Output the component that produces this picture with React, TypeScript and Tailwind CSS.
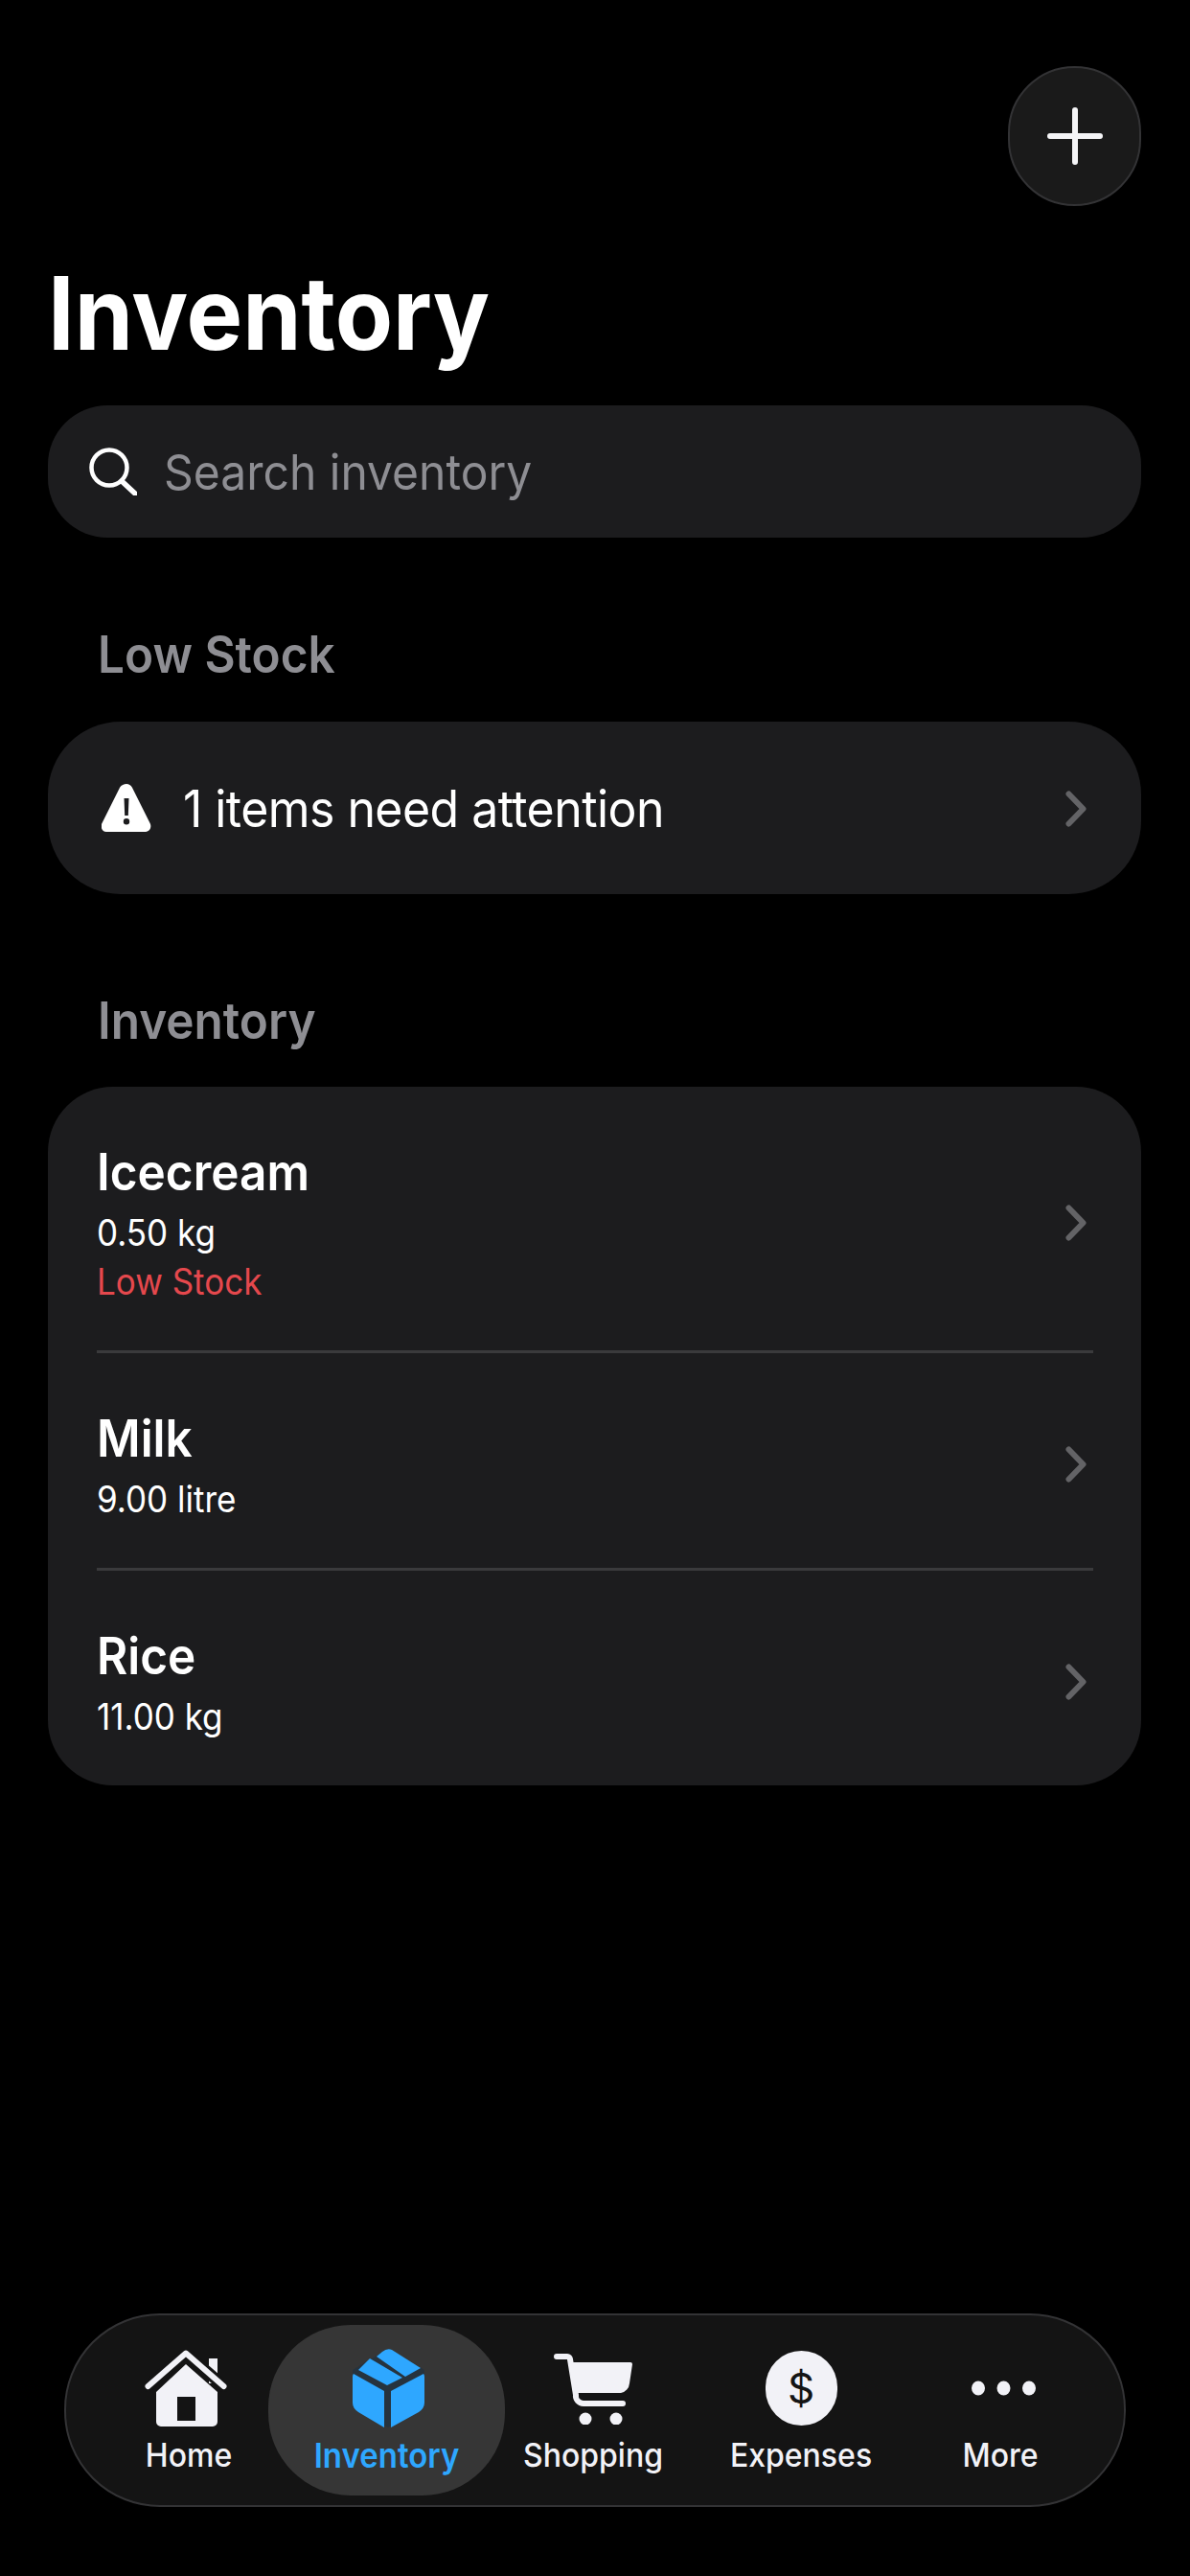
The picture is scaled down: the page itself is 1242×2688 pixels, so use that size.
const tall = "inline-block origin-center scale-y-[1.07]"

const items = [
  { name: "Icecream", qty: "0.50 kg", low: true },
  { name: "Milk", qty: "9.00 litre", low: false },
  { name: "Rice", qty: "11.00 kg", low: false },
]

function Chevron({ className }: { className: string }) {
  return (
    <svg className={`ml-auto shrink-0 ${className}`} width="22" height="38" viewBox="0 0 22 38" aria-hidden="true">
      <path d="M3.500 3.500L18.500 19L3.500 34.500" fill="none" stroke="#636366" strokeWidth="6" strokeLinecap="round" strokeLinejoin="round" />
    </svg>
  )
}

function HomeIcon() {
  return (
    <svg className="mr-[6px]" width="86" height="80" viewBox="0 0 86 80" aria-hidden="true">
      <path d="M67 9h9v26h-9z" fill="#f2f2f7" />
      <path d="M3.500 38L43 3.500L82.500 38" fill="none" stroke="#141414" strokeWidth="12" strokeLinecap="round" strokeLinejoin="round" />
      <path d="M3.500 38L43 3.500L82.500 38" fill="none" stroke="#f2f2f7" strokeWidth="6" strokeLinecap="round" strokeLinejoin="round" />
      <path fillRule="evenodd" d="M43 15L76 44V75a5 5 0 0 1-5 5H17a5 5 0 0 1-5-5V44Z M34 49V74H53V49Z" fill="#f2f2f7" />
    </svg>
  )
}

function BoxIcon() {
  return (
    <svg className="ml-[4px]" width="75" height="82" viewBox="0 0 75 82" aria-hidden="true">
      <path d="M37 0L75 22V60L37 82L0 60V22Z" fill="#26333e" />
      <path d="M1 26L33 44V82L6 66Q0 62 0 56V29Q0 27 1 26Z" fill="#2ea7ff" />
      <path d="M74 26L40 44V82L69 66Q75 62 75 56V29Q75 27 74 26Z" fill="#2ea7ff" />
      <path d="M6 22L18 10L52 30L36 38Z" fill="#2ea7ff" />
      <path d="M25 8L31 3Q36 -1 41 1L71 20L55 29Z" fill="#2ea7ff" />
    </svg>
  )
}

function CartIcon() {
  return (
    <svg width="83" height="75" viewBox="0 0 83 75" aria-hidden="true">
      <path d="M3 4H14a3 3 0 0 1 3 3L23 44a8 8 0 0 0 8 9H72" fill="none" stroke="#f2f2f7" strokeWidth="6" strokeLinecap="round" />
      <path d="M19 10H80a2 2 0 0 1 2 2L79 32a11 11 0 0 1-9 10H25Z" fill="#f2f2f7" />
      <circle cx="33" cy="69" r="6.500" fill="#f2f2f7" />
      <circle cx="65" cy="69" r="6.500" fill="#f2f2f7" />
    </svg>
  )
}

function DotsIcon() {
  return (
    <svg className="ml-[6px]" width="67" height="16" viewBox="0 0 67 16" aria-hidden="true">
      <ellipse cx="7" cy="8" rx="7" ry="7.500" fill="#f2f2f7" />
      <ellipse cx="33.500" cy="8" rx="7" ry="7.500" fill="#f2f2f7" />
      <ellipse cx="60" cy="8" rx="7" ry="7.500" fill="#f2f2f7" />
    </svg>
  )
}

function NavItem({ label, width, active, children }: { label: string; width: string; active?: boolean; children: React.ReactNode }) {
  return (
    <div className={`${width} h-[178px] flex flex-col items-center rounded-[86px] pt-[25px] ${active ? "bg-[#363636]" : ""}`}>
      <div className="h-[82px] flex items-center justify-center">{children}</div>
      <span className={`${tall} mt-[9px] leading-[40px] whitespace-nowrap ${active ? "text-[33px] font-semibold text-[#2ea7ff]" : "text-[32px] font-medium text-[#f2f2f7]"}`}>
        {label}
      </span>
    </div>
  )
}

export default function App() {
  return (
    <div className="w-[1242px] h-[2688px] bg-black flex flex-col pl-[50px] pr-[51px] font-['Inter',sans-serif] text-white overflow-hidden">
      {/* Add button */}
      <div className="flex justify-end pt-[69px]">
        <button aria-label="Add" className="w-[139px] h-[146px] rounded-full bg-[#1a1a1a] border-2 border-[#333335] flex items-center justify-center">
          <svg width="58" height="60" viewBox="0 0 58 60" aria-hidden="true">
            <path d="M29 3v54M3 30h52" stroke="#f5f5f7" strokeWidth="6" strokeLinecap="round" />
          </svg>
        </button>
      </div>

      <h1 className="mt-[56px] mb-[1px] h-[114px] leading-[114px] text-[98.500px] font-bold">
        <span className={tall}>Inventory</span>
      </h1>

      {/* Search */}
      <div className="mt-[37px] h-[138px] rounded-[62px] bg-[#1c1c1e] flex items-center pl-[43px]">
        <svg width="50" height="50" viewBox="0 0 50 50" aria-hidden="true">
          <circle cx="21" cy="21" r="18.500" fill="none" stroke="#fff" strokeWidth="4.500" />
          <path d="M34 35L48 48" stroke="#fff" strokeWidth="5.500" strokeLinecap="round" />
        </svg>
        <span className={`${tall} ml-[28px] mt-[2px] text-[48px] text-[#8e8e93]`}>Search inventory</span>
      </div>

      <h2 className="mt-[92px] pl-[52px] h-[60px] leading-[60px] text-[49.500px] font-semibold text-[#8e8e93]">
        <span className={tall}>Low Stock</span>
      </h2>

      {/* Low stock card */}
      <div className="mt-[40px] h-[180px] rounded-[76px] bg-[#1c1c1e] flex items-center pl-[56px] pr-[57px]">
        <svg width="52" height="50" viewBox="0 0 52 50" aria-hidden="true">
          <path fillRule="evenodd" d="M26 0c2.500 0 4.500 1.300 5.800 3.600l19 38c1.600 3.500-.5 8.400-4.800 8.400H5C.7 50-1.400 45.100.2 41.600l19-38C20.500 1.300 23.500 0 26 0Z M23.500 15h5l-.7 18h-3.600Z M26 36a3.200 3.200 0 1 0 0 6.400a3.200 3.200 0 0 0 0-6.400Z" fill="#fff" />
        </svg>
        <span className={`${tall} ml-[33px] mt-[2px] text-[50px] tracking-[-0.55px] text-white`}>1 items need attention</span>
        <Chevron className="mt-[2px]" />
      </div>

      <h2 className="mt-[102px] pl-[52px] h-[60px] leading-[60px] text-[49.500px] font-semibold text-[#8e8e93]">
        <span className={tall}>Inventory</span>
      </h2>

      {/* Items */}
      <div className="mt-[39px] rounded-[68px] bg-[#1c1c1e] pl-[51px] pr-[50px]">
        {items.map((item, i) => (
          <div key={item.name} className={`flex items-center pt-[59px] pb-[48px] pr-[7px] ${i > 0 ? "border-t-[3px] border-[#3a3a3c]" : ""}`}>
            <div className="flex flex-col items-start">
              <span className={`${tall} h-[60px] leading-[60px] text-[49.500px] font-semibold`}>{item.name}</span>
              <span className={`${tall} mt-[9px] h-[48px] leading-[48px] text-[35px]`}>{item.qty}</span>
              {item.low && <span className={`${tall} mt-[3px] h-[48px] leading-[48px] text-[35px] text-[#e5484d]`}>Low Stock</span>}
            </div>
            <Chevron className="-mt-[3px]" />
          </div>
        ))}
      </div>

      {/* Tab bar */}
      <nav className="mt-auto mb-[72px] ml-[17px] mr-[16px] h-[202px] rounded-[100px] bg-[#141414] border-2 border-[#333335] flex items-center pl-[45px]">
        <NavItem label="Home" width="w-[166px]"><HomeIcon /></NavItem>
        <NavItem label="Inventory" width="w-[247px]" active><BoxIcon /></NavItem>
        <NavItem label="Shopping" width="w-[184px]"><CartIcon /></NavItem>
        <NavItem label="Expenses" width="w-[250px]">
          <div className="w-[75px] h-[78px] rounded-full bg-[#f2f2f7] flex items-center justify-center">
            <span className="text-[44px] leading-none text-[#141414]">$</span>
          </div>
        </NavItem>
        <NavItem label="More" width="w-[166px]"><DotsIcon /></NavItem>
      </nav>
    </div>
  )
}
